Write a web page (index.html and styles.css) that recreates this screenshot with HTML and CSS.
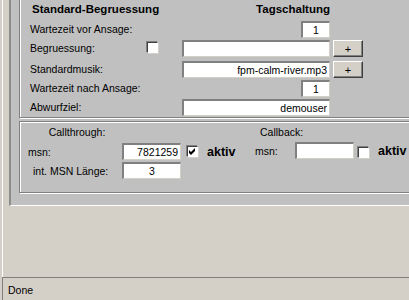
FILE: index.html
```html
<!DOCTYPE html>
<html lang="de">
<head>
    <meta charset="UTF-8">
    <title>Ansage</title>
    <link rel="stylesheet" href="styles.css">
</head>
<body>

    <div class="frame">
        <div class="outer">

            <div class="panel panel-first">
                <div class="grid">
                    <div class="head head-left">Standard-Begruessung</div>
                    <div class="head head-right">Tagschaltung</div>

                    <div class="label">Wartezeit vor Ansage:</div>
                    <input class="input input-short" type="text" value="1">

                    <div class="label">Begruessung:</div>
                    <span class="check check-grid"></span>
                    <input class="input input-wide" type="text" value="">
                    <button class="btn" type="button">+</button>

                    <div class="label">Standardmusik:</div>
                    <input class="input input-wide" type="text" value="fpm-calm-river.mp3">
                    <button class="btn" type="button">+</button>

                    <div class="label">Wartezeit nach Ansage:</div>
                    <input class="input input-short" type="text" value="1">

                    <div class="label">Abwurfziel:</div>
                    <input class="input input-wide" type="text" value="demouser">
                </div>
            </div>

            <div class="panel panel-second">
                <div class="calls">
                    <div class="call-left">
                        <div class="ctitle">Callthrough:</div>
                        <div class="crow">
                            <div class="clabel">msn:</div>
                            <input class="input cinput" type="text" value="7821259">
                            <span class="check check-left">
                                <svg width="7" height="7" viewBox="0 0 7 7"><path d="M0 2 L2 4 L6 0 L6 3 L2 7 L0 5 Z" fill="#000"/></svg>
                            </span>
                            <span class="aktiv">aktiv</span>
                        </div>
                        <div class="crow">
                            <div class="clabel clabel-indent">int. MSN Länge:</div>
                            <input class="input cinput input-center" type="text" value="3">
                        </div>
                    </div>

                    <div class="call-right">
                        <div class="ctitle ctitle-right">Callback:</div>
                        <div class="crow">
                            <div class="clabel clabel-right">msn:</div>
                            <input class="input cinput" type="text" value="">
                            <span class="check check-right"></span>
                            <span class="aktiv">aktiv</span>
                        </div>
                    </div>
                </div>
            </div>

        </div>
    </div>

    <div class="status">Done</div>

</body>
</html>
```

FILE: styles.css
```css
body {
    margin: 0;
    height: 300px;
    overflow: hidden;
    background-color: #d4d0c8;
    color: #000;
    font-family: "Liberation Sans", Arial, sans-serif;
    font-size: 10.5px;
}

.frame {
    height: 277px;
    margin-left: 2px;
    padding-left: 6px;
    border-left: 1px solid #fff;
    box-sizing: border-box;
    overflow: hidden;
}

.outer {
    width: 440px;
    padding: 0 0 12px 8px;
    background-color: #c0c0c0;
    border-left: 2px solid #8c8c8c;
    border-bottom: 1px solid #fff;
}

/* etched frame like the old fieldsets */
.panel {
    border: 1px solid #808080;
    box-shadow: inset 1px 1px #fff, 1px 1px #fff;
}

.panel-first {
    border-top: none;
    box-shadow: inset 1px 0 #fff, 1px 1px #fff;
    padding: 0 0 1px 10px;
}

.panel-second {
    margin-top: 3px;
    padding: 0 0 13px 8px;
}

.grid {
    display: grid;
    grid-template-columns: 116px 36px 148px 33px;
    grid-template-rows: 19px 17px 19px 17px 17px 17px;
    row-gap: 2px;
    align-items: start;
}

.head {
    font-size: 11.5px;
    font-weight: bold;
    line-height: 19px;
    white-space: nowrap;
}

.head-left {
    grid-column: 1 / 3;
    padding-left: 2px;
}

.head-right {
    grid-column: 3;
    justify-self: end;
}

.label {
    grid-column: 1;
    line-height: 17px;
    white-space: nowrap;
}

.input {
    box-sizing: border-box;
    height: 17px;
    margin: 0;
    padding: 0 2px;
    background-color: #fff;
    border-style: solid;
    border-width: 2px 1px 1px 2px;
    border-color: #808080 #d4d0c8 #d4d0c8 #808080;
    font-family: "Liberation Sans", Arial, sans-serif;
    font-size: 10.5px;
    color: #000;
    text-align: right;
    outline: none;
}

.input-wide {
    grid-column: 3;
    width: 148px;
}

.input-short {
    grid-column: 3;
    justify-self: end;
    width: 29px;
    text-align: center;
}

.input-center {
    text-align: center;
}

.btn {
    grid-column: 4;
    justify-self: end;
    width: 30px;
    height: 17px;
    padding: 0;
    background-color: #d4d0c8;
    border: 1px solid;
    border-color: #fff #404040 #404040 #fff;
    box-shadow: inset -1px -1px #808080;
    font-family: "Liberation Sans", Arial, sans-serif;
    font-size: 11px;
    color: #000;
}

.check {
    display: flex;
    align-items: center;
    justify-content: center;
    box-sizing: border-box;
    width: 11px;
    height: 11px;
    background-color: #fff;
    border: 1px solid;
    border-color: #404040 #fff #fff #404040;
    box-shadow: -1px -1px #808080, 1px 1px #d4d0c8;
}

.check-grid {
    grid-column: 2;
    margin: 2px 0 0 1px;
}

.calls {
    display: flex;
}

.call-left {
    width: 227px;
}

.ctitle {
    width: 98px;
    line-height: 21px;
    text-align: center;
}

.ctitle-right {
    width: auto;
    line-height: 20px;
    padding-left: 5px;
    text-align: left;
}

.crow {
    display: flex;
    align-items: center;
    height: 17px;
}

.crow + .crow {
    margin-top: 2px;
}

.clabel {
    width: 94px;
    box-sizing: border-box;
    white-space: nowrap;
}

.clabel-indent {
    padding-left: 5px;
}

.clabel-right {
    width: 40px;
}

.cinput {
    width: 59px;
}

.check-left {
    margin-left: 6px;
}

.check-right {
    align-self: flex-end;
    margin: 0 0 1px 4px;
}

.aktiv {
    margin-left: 9px;
    font-size: 12.5px;
    font-weight: bold;
}

.status {
    box-sizing: border-box;
    height: 23px;
    margin-left: 2px;
    padding: 2px 0 0 5px;
    border-top: 1px solid #808080;
    border-left: 1px solid #808080;
    line-height: 21px;
}
```
